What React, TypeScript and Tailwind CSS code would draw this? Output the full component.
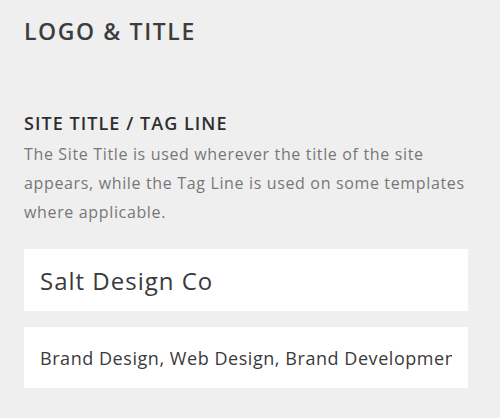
import React from 'react';

export default function App() {
  return (
    <div
      className="w-[500px] h-[418px] bg-[#efefef] px-6 pt-[15px]"
      style={{ fontFamily: '"Open Sans", "Liberation Sans", sans-serif' }}
    >
      <h1 className="text-[23px] leading-[32px] font-semibold text-[#3d3d3d] tracking-[1.6px]">
        LOGO &amp; TITLE
      </h1>

      <div className="mt-[64px]">
        <h2 className="text-[18px] leading-[24px] font-semibold text-[#2e2e2e] tracking-[1.05px]">
          SITE TITLE / TAG LINE
        </h2>
        <p className="mt-[5px] text-[16px] leading-[29px] text-[#777777] tracking-[0.65px]">
          <span className="block whitespace-nowrap">The Site Title is used wherever the title of the site</span>
          <span className="block whitespace-nowrap">appears, while the Tag Line is used on some templates</span>
          <span className="block whitespace-nowrap">where applicable.</span>
        </p>
      </div>

      <div className="mt-[22px] flex flex-col gap-4 w-[444px]">
        <input
          className="h-[62px] bg-white pl-4 pr-4 text-[24px] text-[#3a3a3a] tracking-[1px] outline-none"
          defaultValue="Salt Design Co"
          style={{ fontFamily: '"Open Sans", sans-serif' }}
        />
        <input
          className="h-[61px] bg-white pl-4 pr-4 text-[18px] text-[#3a3a3a] tracking-[0.55px] outline-none"
          defaultValue="Brand Design, Web Design, Brand Development"
          style={{ fontFamily: '"Open Sans", sans-serif' }}
        />
      </div>
    </div>
  );
}
